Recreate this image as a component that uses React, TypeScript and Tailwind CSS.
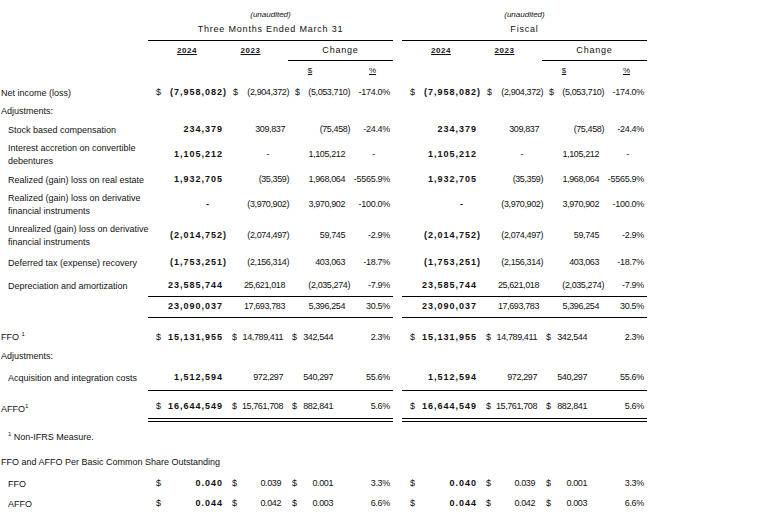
import type { ReactNode } from "react";
import { clsx as cn } from "clsx";

type Vals = {
  v1: string;
  v2: string;
  v3: string;
  pct: string;
  dollars?: boolean;
  kind?: "std" | "low" | "share";
};

type Line = {
  label: ReactNode;
  indent?: boolean;
  row: string;
  block?: string;
  vals?: Vals;
};

const Sup = () => <span className="align-super text-[6px] leading-none">1</span>;

const lines: Line[] = [
  {
    label: "Net income (loss)",
    row: "h-[18px]",
    vals: { v1: "(7,958,082)", v2: "(2,904,372)", v3: "(5,053,710)", pct: "-174.0%", dollars: true },
  },
  { label: "Adjustments:", row: "h-[18px]" },
  {
    label: "Stock based compensation",
    indent: true,
    row: "h-[20px]",
    vals: { v1: "234,379", v2: "309,837", v3: "(75,458)", pct: "-24.4%" },
  },
  {
    label: (
      <>
        Interest accretion on convertible
        <br />
        debentures
      </>
    ),
    indent: true,
    row: "h-[30px]",
    vals: { v1: "1,105,212", v2: "-", v3: "1,105,212", pct: "-" },
  },
  {
    label: "Realized (gain) loss on real estate",
    indent: true,
    row: "h-[20px]",
    vals: { v1: "1,932,705", v2: "(35,359)", v3: "1,968,064", pct: "-5565.9%" },
  },
  {
    label: (
      <>
        Realized (gain) loss on derivative
        <br />
        financial instruments
      </>
    ),
    indent: true,
    row: "h-[30px]",
    vals: { v1: "-", v2: "(3,970,902)", v3: "3,970,902", pct: "-100.0%" },
  },
  {
    label: (
      <>
        Unrealized (gain) loss on derivative
        <br />
        financial instruments
      </>
    ),
    indent: true,
    row: "h-[31px]",
    vals: { v1: "(2,014,752)", v2: "(2,074,497)", v3: "59,745", pct: "-2.9%" },
  },
  {
    label: "Deferred tax (expense) recovery",
    indent: true,
    row: "h-[24px]",
    vals: { v1: "(1,753,251)", v2: "(2,156,314)", v3: "403,063", pct: "-18.7%" },
  },
  {
    label: "Depreciation and amortization",
    indent: true,
    row: "h-[22px]",
    block: "border-b border-black",
    vals: { v1: "23,585,744", v2: "25,621,018", v3: "(2,035,274)", pct: "-7.9%" },
  },
  {
    label: "",
    row: "h-[21px]",
    block: "border-b border-black",
    vals: { v1: "23,090,037", v2: "17,693,783", v3: "5,396,254", pct: "30.5%" },
  },
  {
    label: (
      <>
        FFO <Sup />
      </>
    ),
    row: "h-[29px] pt-[10px]",
    vals: { v1: "15,131,955", v2: "14,789,411", v3: "342,544", pct: "2.3%", dollars: true, kind: "low" },
  },
  { label: "Adjustments:", row: "h-[18px]" },
  {
    label: "Acquisition and integration costs",
    indent: true,
    row: "h-[26px]",
    block: "border-b border-black",
    vals: { v1: "1,512,594", v2: "972,297", v3: "540,297", pct: "55.6%", kind: "low" },
  },
  {
    label: (
      <>
        AFFO
        <Sup />
      </>
    ),
    row: "h-[31px] pt-[5px]",
    block: "border-b-4 border-double border-black",
    vals: { v1: "16,644,549", v2: "15,761,708", v3: "882,841", pct: "5.6%", dollars: true, kind: "low" },
  },
  {
    label: (
      <>
        <Sup /> Non-IFRS Measure.
      </>
    ),
    indent: true,
    row: "h-[30px]",
  },
  { label: "FFO and AFFO Per Basic Common Share Outstanding", row: "h-[20px]" },
  {
    label: "FFO",
    indent: true,
    row: "h-[24px]",
    vals: { v1: "0.040", v2: "0.039", v3: "0.001", pct: "3.3%", dollars: true, kind: "share" },
  },
  {
    label: "AFFO",
    indent: true,
    row: "h-[16px]",
    vals: { v1: "0.044", v2: "0.042", v3: "0.003", pct: "6.6%", dollars: true, kind: "share" },
  },
];

function pad1(v: string) {
  if (v === "-") return "pr-[18px]";
  if (v.endsWith(")")) return "pr-[1px]";
  return "pr-[5px]";
}

function pad2(v: string, kind?: Vals["kind"]) {
  if (v === "-") return "pr-[22px]";
  if (v.endsWith(")")) return "pr-[2px]";
  if (kind === "share") return "pr-[10px]";
  if (kind === "low") return "pr-[8px]";
  return "pr-[6px]";
}

function pad3(v: string, kind?: Vals["kind"]) {
  if (v === "-") return "pr-[20px]";
  if (v.endsWith(")")) return "pr-[2px]";
  if (kind === "share" || kind === "low") return "pr-[19px]";
  return "pr-[7px]";
}

function pctPad(v: string) {
  if (v === "-") return "pr-[18px]";
  return "pr-[3px]";
}

function Block({ vals, className }: { vals?: Vals; className?: string }) {
  const low = vals?.kind === "low" || vals?.kind === "share";
  return (
    <div className={cn("flex w-[245px] items-center", className)}>
      {vals ? (
        <>
          <span className="w-[18px] pl-[8px]">{vals.dollars ? "$" : ""}</span>
          <span className={cn("w-[62px] text-right font-bold tracking-[1px]", pad1(vals.v1))}>{vals.v1}</span>
          <span className={cn("w-[12px]", low ? "pl-[4px]" : "pl-[5px]")}>{vals.dollars ? "$" : ""}</span>
          <span className={cn("w-[51px] text-right tracking-[-0.4px]", pad2(vals.v2, vals.kind))}>{vals.v2}</span>
          <span className={cn("w-[9px]", low ? "pl-[1px]" : "pl-[4px]")}>{vals.dollars ? "$" : ""}</span>
          <span className={cn("w-[52px] text-right tracking-[-0.4px]", pad3(vals.v3, vals.kind))}>{vals.v3}</span>
          <span className={cn("w-[41px] text-right tracking-[-0.3px]", pctPad(vals.pct))}>{vals.pct}</span>
        </>
      ) : null}
    </div>
  );
}

function HeaderBlock({ title }: { title: string }) {
  return (
    <div className="w-[245px]">
      <div className="h-[13px] text-center text-[8px] italic leading-[13px]">(unaudited)</div>
      <div className="h-[20px] border-b border-black text-center leading-[16px] tracking-[0.8px]">{title}</div>
      <div className="flex h-[20px] leading-[19px]">
        <div className="w-[78px] text-center">
          <span className="text-[8px] font-bold tracking-[0.5px] underline">2024</span>
        </div>
        <div className="w-[49px] text-center">
          <span className="text-[8px] font-bold tracking-[0.5px] underline">2023</span>
        </div>
        <div className="w-[13px]" />
        <div className="w-[105px] border-b border-black text-center tracking-[0.8px]">Change</div>
      </div>
      <div className="flex h-[23px] text-[8px] leading-[20px]">
        <div className="w-[140px]" />
        <div className="w-[44px] text-center underline">$</div>
        <div className="w-[20px]" />
        <div className="w-[41px] text-center underline">%</div>
      </div>
    </div>
  );
}

export default function App() {
  return (
    <div className="h-[516px] w-[773px] overflow-hidden bg-white font-['Liberation_Sans',Arial,sans-serif] text-[9px] text-[#111]">
      <div className="flex pt-[8px]">
        <div className="w-[148px]" />
        <HeaderBlock title="Three Months Ended March 31" />
        <div className="w-[9px]" />
        <HeaderBlock title="Fiscal" />
      </div>

      {lines.map((line, i) => (
        <div key={i} className={cn("flex", line.row)}>
          <div
            className={cn(
              "flex w-[148px] items-center whitespace-nowrap leading-[13px]",
              line.indent ? "pl-[8px]" : "pl-[1px]"
            )}
          >
            <span>{line.label}</span>
          </div>
          <Block vals={line.vals} className={line.block} />
          <div className="w-[9px]" />
          <Block vals={line.vals} className={line.block} />
        </div>
      ))}
    </div>
  );
}
